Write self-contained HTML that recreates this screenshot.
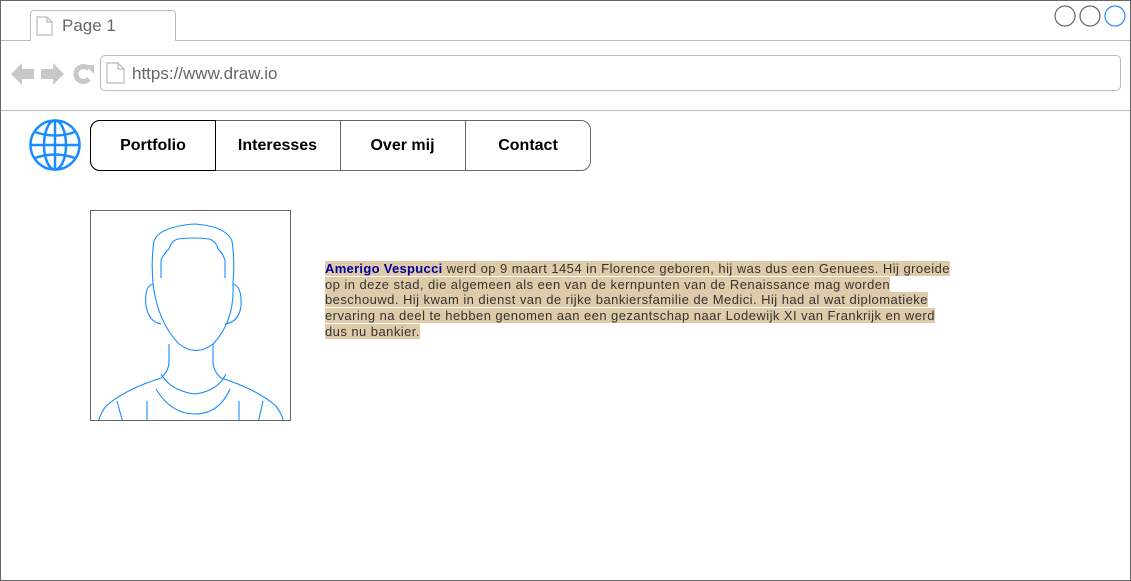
<!DOCTYPE html>
<html><head><style>
*{margin:0;padding:0;box-sizing:border-box}
body{width:1131px;height:581px;position:relative;background:#fff;font-family:"Liberation Sans",Arial,sans-serif;overflow:hidden}
.a{position:absolute}
</style></head><body>
<div class="a" style="left:0;top:0;width:1131px;height:581px;border:1px solid #666"></div>
<div class="a" style="left:1px;top:40px;width:1129px;height:1px;background:#bbb"></div>
<div class="a" style="left:30px;top:10px;width:146px;height:31px;border:1px solid #bbb;border-bottom:none;border-radius:4px 4px 0 0;background:#fff"></div>
<svg class="a" style="left:36px;top:16px" width="18" height="20"><path d="M1 1H11L16 6V19H1Z M11 1V6H16" fill="none" stroke="#bbb" stroke-width="1.2"/></svg>
<div class="a" style="left:62px;top:16px;font-size:17px;color:#666">Page 1</div>
<svg class="a" style="left:1054px;top:4px" width="75" height="24"><circle cx="11" cy="12" r="10" fill="none" stroke="#666" stroke-width="1.2"/><circle cx="36" cy="12" r="10" fill="none" stroke="#666" stroke-width="1.2"/><circle cx="61" cy="12" r="10" fill="none" stroke="#1a8cff" stroke-width="1.2"/></svg>
<svg class="a" style="left:0;top:60px" width="100" height="30">
<path d="M11 14L22 3V9H34V19H22V25Z" fill="#c8c8c8"/>
<path d="M64 14L53 3V9H41V19H53V25Z" fill="#c8c8c8"/>
<path d="M89 19A7.5 7.5 0 1 1 89 9" fill="none" stroke="#c8c8c8" stroke-width="5"/>
<path d="M85 5H94V14Z" fill="#c8c8c8"/>
</svg>
<div class="a" style="left:100px;top:55px;width:1021px;height:36px;border:1px solid #bbb;border-radius:5px"></div>
<svg class="a" style="left:106px;top:62px" width="20" height="22"><path d="M1 1H12L18 7V21H1Z M12 1V7H18" fill="none" stroke="#bbb" stroke-width="1.2"/></svg>
<div class="a" style="left:132px;top:64px;font-size:17px;color:#666">https://www.draw.io</div>
<div class="a" style="left:1px;top:110px;width:1129px;height:1px;background:#bbb"></div>
<svg class="a" style="left:29px;top:119px" width="54" height="54" fill="none" stroke="#1a8cff" stroke-width="2.5"><circle cx="26" cy="26" r="24.5"/><ellipse cx="26" cy="26" rx="11" ry="24.5"/><path d="M26 1.5V50.5M1.5 26H50.5M6 13Q26 20 46 13M6 39Q26 32 46 39"/></svg>
<div class="a" style="left:90px;top:120px;width:501px;height:51px;border:1px solid #666;border-radius:10px"></div>
<div class="a" style="left:90px;top:120px;width:126px;height:51px;border:1px solid #000;border-radius:10px 0 0 10px"></div>
<div class="a" style="left:340px;top:121px;width:1px;height:49px;background:#666"></div>
<div class="a" style="left:465px;top:121px;width:1px;height:49px;background:#666"></div>
<div class="a" style="left:90px;top:137px;width:126px;text-align:center;font-size:16px;font-weight:bold">Portfolio</div>
<div class="a" style="left:215px;top:137px;width:125px;text-align:center;font-size:16px;font-weight:bold">Interesses</div>
<div class="a" style="left:340px;top:137px;width:125px;text-align:center;font-size:16px;font-weight:bold">Over mij</div>
<div class="a" style="left:465px;top:137px;width:126px;text-align:center;font-size:16px;font-weight:bold">Contact</div>
<div class="a" style="left:90px;top:210px;width:201px;height:211px;border:1px solid #666"></div>
<svg class="a" style="left:91px;top:211px" width="199" height="209" fill="none" stroke="#1a8cff" stroke-width="1.1">
<path d="M63 30Q60 50 62 72Q66 110 88 133Q105 146 122 133Q144 110 142 72Q144 50 141 30Q135 15 103 13Q68 16 63 30Z"/>
<path d="M70 67V49Q74 41 78 38Q80 30 87 28Q103 26 118 28Q125 30 127 38Q131 41 134 49V67"/>
<path d="M62 73Q53 75 55 95Q58 111 70 113M142 73Q151 75 150 95Q148 111 134 113"/>
<path d="M78 133V150Q78 160 70 167Q35 178 15 195Q9 203 7 212M122 133V150Q122 160 130 167Q165 178 185 195Q191 203 193 212"/>
<path d="M70 163Q80 180 104 183Q127 180 135 163M65 178Q80 203 104 203Q128 203 139 178"/>
<path d="M26 190L32 212M56 190V212M148 190V212M172 190L167 212"/>
</svg>
<div class="a" style="left:325px;top:261px;width:700px;font-size:13px;letter-spacing:0.45px;line-height:15.7px;color:#333"><span style="background:#dfcba9"><b style="color:#000099;letter-spacing:0.3px">Amerigo Vespucci</b> werd op 9 maart 1454 in Florence geboren, hij was dus een Genuees. Hij groeide<br>op in deze stad, die algemeen als een van de kernpunten van de Renaissance mag worden<br>beschouwd. Hij kwam in dienst van de rijke bankiersfamilie de Medici. Hij had al wat diplomatieke<br>ervaring na deel te hebben genomen aan een gezantschap naar Lodewijk XI van Frankrijk en werd<br>dus nu bankier.</span></div>
</body></html>
